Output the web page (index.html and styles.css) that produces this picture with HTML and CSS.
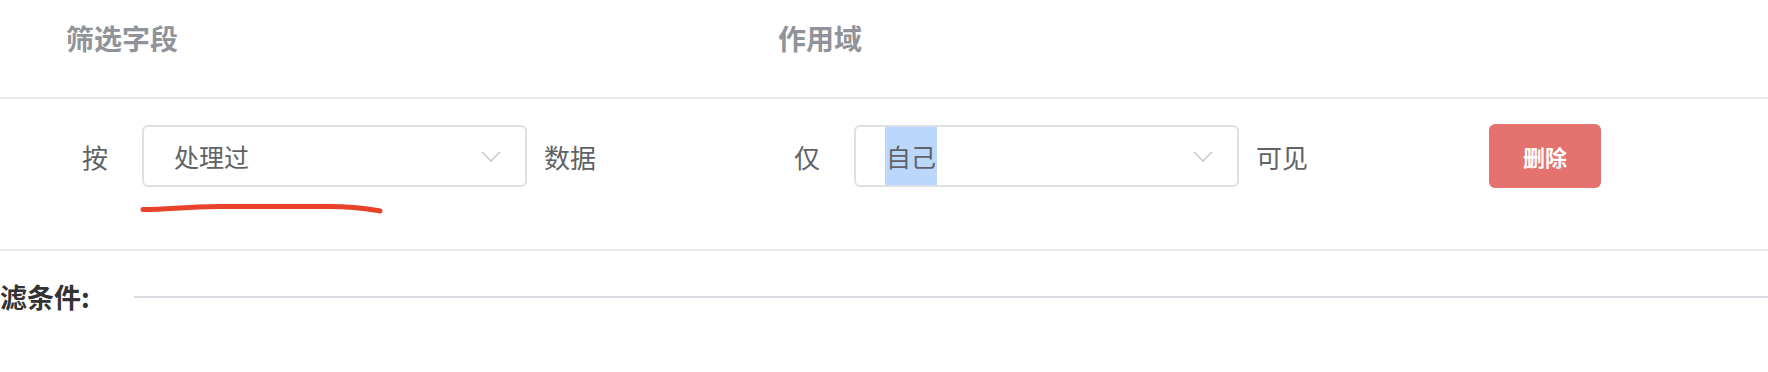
FILE: index.html
```html
<html>
  <head>
    <meta http-equiv="content-type" content="text/html;charset=UTF8">
    <link rel="stylesheet" href="styles.css">
    <title>筛选</title>
  </head>
  <body>
    <div class="table">
      <!-- header -->
      <div class="row head">
        <div class="cell">筛选字段</div>
        <div class="cell">作用域</div>
        <div class="cell"></div>
      </div>
      <!-- one rule -->
      <div class="row body">
        <div class="cell">
          <div class="field">
            <span class="word">按</span>
            <div class="select">
              <span class="value">处理过</span>
              <svg class="arrow" width="20" height="11" viewBox="0 0 20 11"><path d="M1 1 L10 10 L19 1" fill="none" stroke="#c0c4cc" stroke-width="1.4"/></svg>
            </div>
            <span class="word">数据</span>
          </div>
          <svg class="mark" width="246" height="14" viewBox="0 0 246 14"><path d="M3 7.5 C30 7.5 40 5 80 4.5 L190 4.5 C215 4.5 228 7 240 9" fill="none" stroke="#e8432a" stroke-width="5" stroke-linecap="round"/></svg>
        </div>
        <div class="cell">
          <div class="field">
            <span class="word">仅</span>
            <div class="select">
              <span class="value picked">自己</span>
              <svg class="arrow" width="20" height="11" viewBox="0 0 20 11"><path d="M1 1 L10 10 L19 1" fill="none" stroke="#c0c4cc" stroke-width="1.4"/></svg>
            </div>
            <span class="word">可见</span>
          </div>
        </div>
        <div class="cell">
          <button class="btn_del">删除</button>
        </div>
      </div>
    </div>
    <div class="filter">
      <span class="filter_title">滤条件:</span>
      <div class="filter_line"></div>
    </div>
  </body>
</html>
```
FILE: styles.css
```css
body{
  margin: 0;
  background: #fff;
  font-family: "Noto Sans CJK SC", "Noto Sans", sans-serif;
  overflow: hidden;
}
.table{
  width: 100%;
  overflow: hidden;
}
.row{
  display: flex;
  border-bottom: 2px solid #e9edf2;
}
.cell{
  flex: 0 0 712px;
  box-sizing: border-box;
  position: relative;
}
.head{
  height: 99px;
  box-sizing: border-box;
}
.head .cell{
  padding: 18px 0 0 66px;
  font-size: 28px;
  line-height: 40px;
  font-weight: bold;
  color: #909399;
}
.body{
  height: 152px;
  box-sizing: border-box;
}
.body .cell{
  padding: 26px 0 0 82px;
}
.field{
  display: flex;
  align-items: center;
}
.word{
  font-size: 26px;
  color: #606266;
}
.select{
  width: 385px;
  height: 62px;
  box-sizing: border-box;
  border: 2px solid #dfdfe5;
  border-radius: 6px;
  margin: 0 17px 0 34px;
  padding: 0 24px 0 30px;
  display: flex;
  align-items: center;
  justify-content: space-between;
}
.value{
  font-size: 25px;
  line-height: 58px;
  color: #606266;
}
.picked{
  background: #bbd7fb;
  padding: 0 1px;
  margin-left: -1px;
}
.mark{
  position: absolute;
  left: 140px;
  top: 103px;
}
.btn_del{
  width: 112px;
  height: 64px;
  margin-left: -17px;
  margin-top: -1px;
  border: none;
  border-radius: 6px;
  background: #e4736f;
  color: #fff;
  font-family: "Noto Sans CJK SC", sans-serif;
  font-size: 22px;
  font-weight: bold;
}
.filter{
  display: flex;
  align-items: center;
  padding-top: 31px;
}
.filter_title{
  font-size: 27px;
  line-height: 30px;
  font-weight: bold;
  color: #333;
}
.filter_line{
  flex: 1;
  height: 2px;
  margin-left: 44px;
  background: #dcdce2;
}
```
